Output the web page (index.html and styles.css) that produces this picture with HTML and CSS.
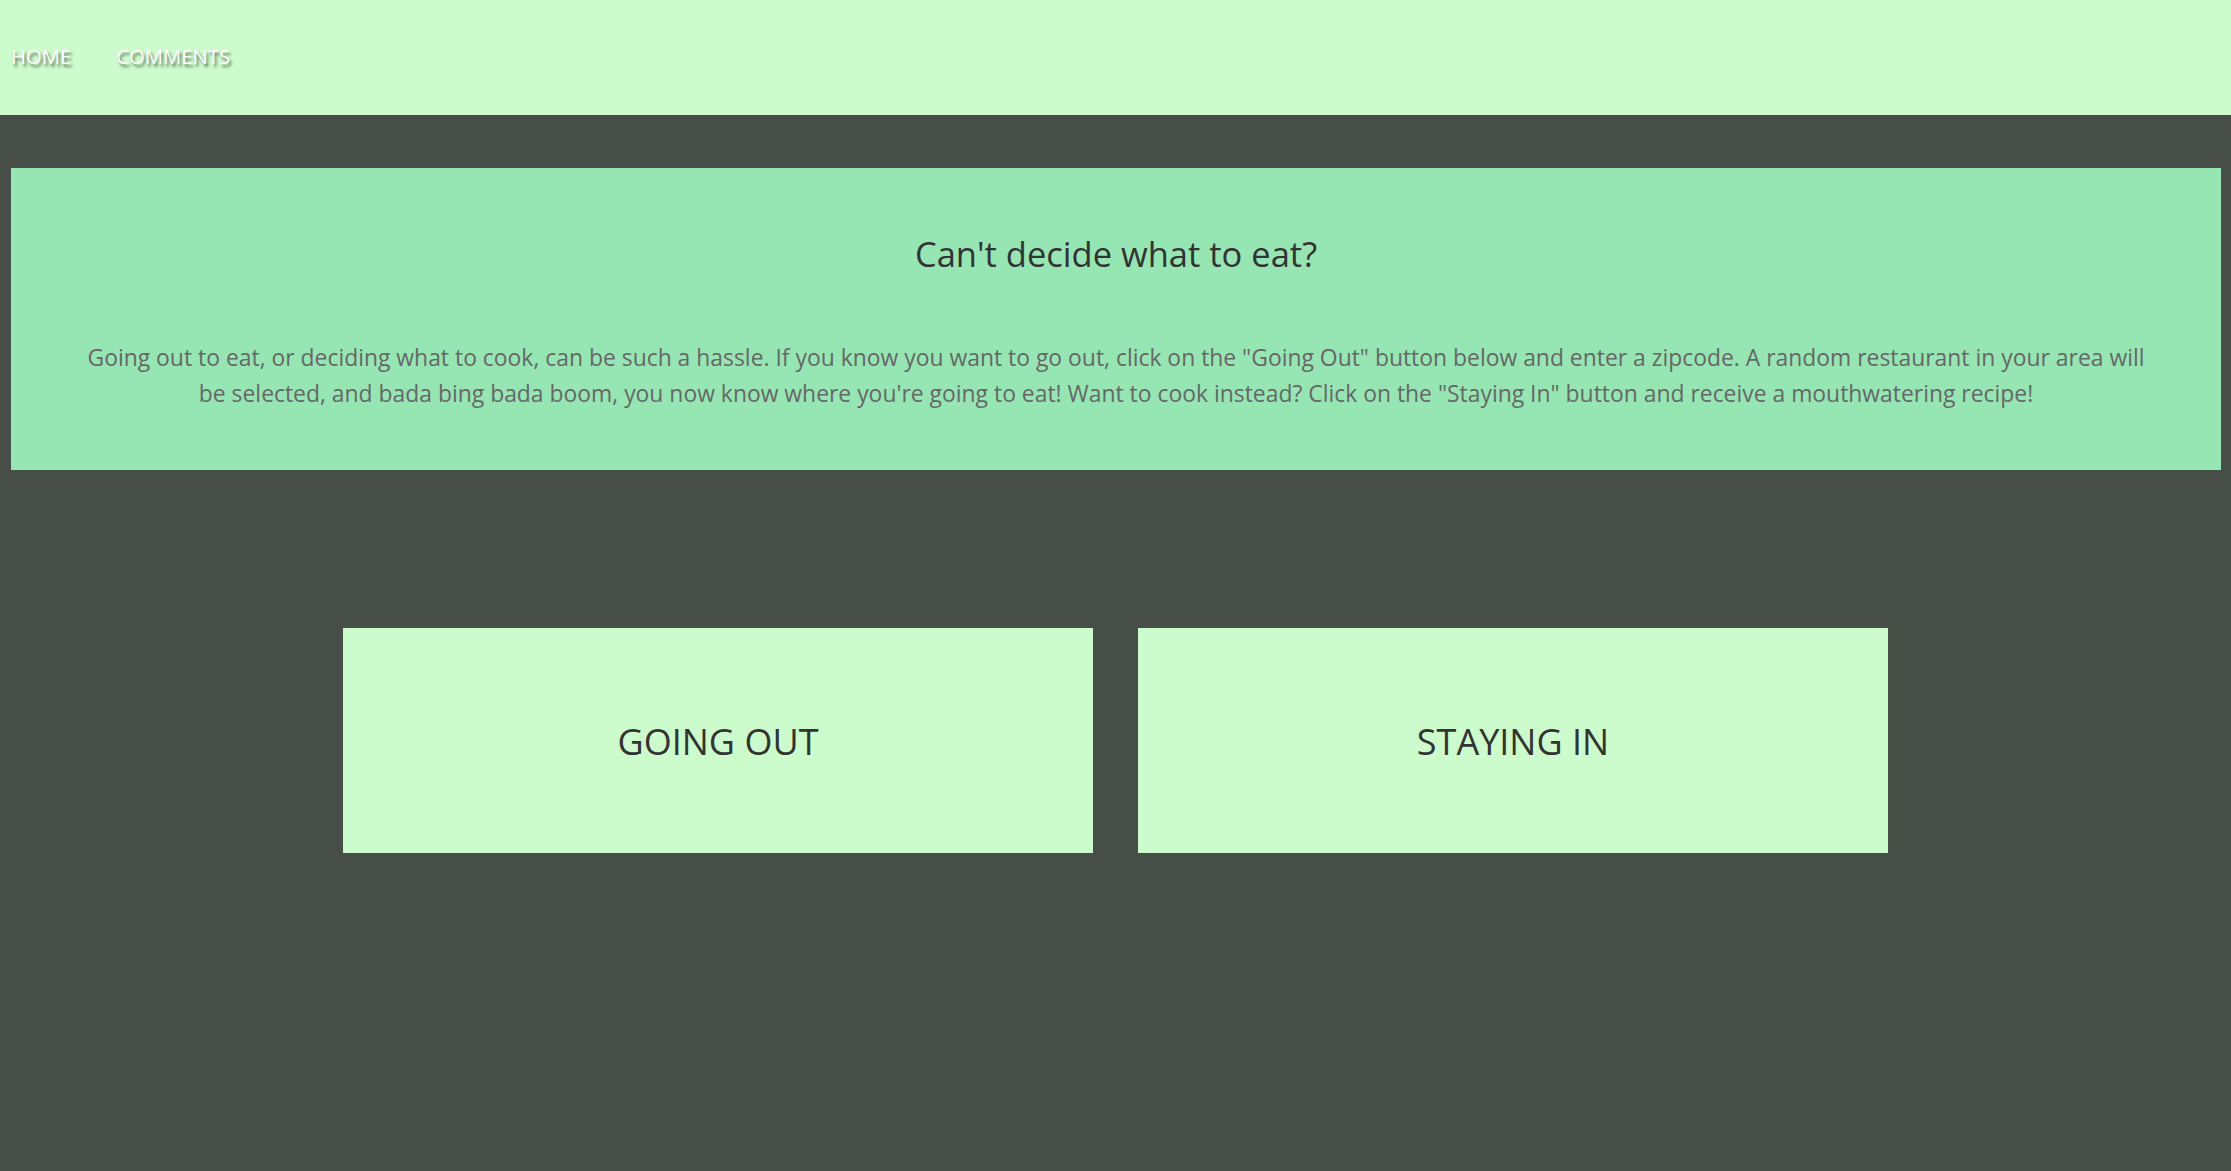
FILE: index.html
```html
<!DOCTYPE html>
<html lang="en">
<head>
<meta charset="utf-8">
<title>What to eat</title>
<link rel="stylesheet" href="styles.css">
</head>
<body>
<header class="nav">
  <a class="nav-link" href="#">HOME</a>
  <a class="nav-link" href="#">COMMENTS</a>
</header>
<section class="hero">
  <h1 class="hero-title">Can't decide what to eat?</h1>
  <p class="hero-text">Going out to eat, or deciding what to cook, can be such a hassle. If you know you want to go out, click on the "Going Out" button below and enter a zipcode. A random restaurant in your area will be selected, and bada bing bada boom, you now know where you're going to eat! Want to cook instead? Click on the "Staying In" button and receive a mouthwatering recipe!</p>
</section>
<main class="choices">
  <a class="choice" href="#">GOING OUT</a>
  <a class="choice" href="#">STAYING IN</a>
</main>
</body>
</html>
```

FILE: styles.css
```css
html, body {
  margin: 0;
  padding: 0;
}
body {
  background: #474e48;
  font-family: "Open Sans", "Noto Sans", sans-serif;
  min-height: 1171px;
}
.nav {
  height: 115px;
  background: #ccfccb;
  display: flex;
  align-items: center;
  gap: 45px;
  padding-left: 11px;
  padding-bottom: 3px;
  box-sizing: border-box;
}
.nav-link {
  color: #ffffff;
  text-decoration: none;
  font-size: 20.3px;
  line-height: 28px;
  text-shadow: 2px 3px 3px rgba(0, 0, 0, 0.55);
}
.hero {
  margin: 53px 10px 0 11px;
  background: #95e6b3;
  padding: 62px 70px 58px;
  text-align: center;
}
.hero-title {
  margin: 0;
  font-size: 34.5px;
  line-height: 47px;
  font-weight: 400;
  color: #333333;
}
.hero-text {
  margin: 63px 0 0;
  font-size: 22.9px;
  line-height: 36px;
  color: #676767;
}
.choices {
  display: flex;
  justify-content: center;
  gap: 45px;
  margin-top: 158px;
}
.choice {
  width: 750px;
  height: 225px;
  background: #ccfccb;
  display: flex;
  align-items: center;
  justify-content: center;
  color: #333333;
  text-decoration: none;
  font-size: 36px;
  padding-top: 2px;
  box-sizing: border-box;
}
```
